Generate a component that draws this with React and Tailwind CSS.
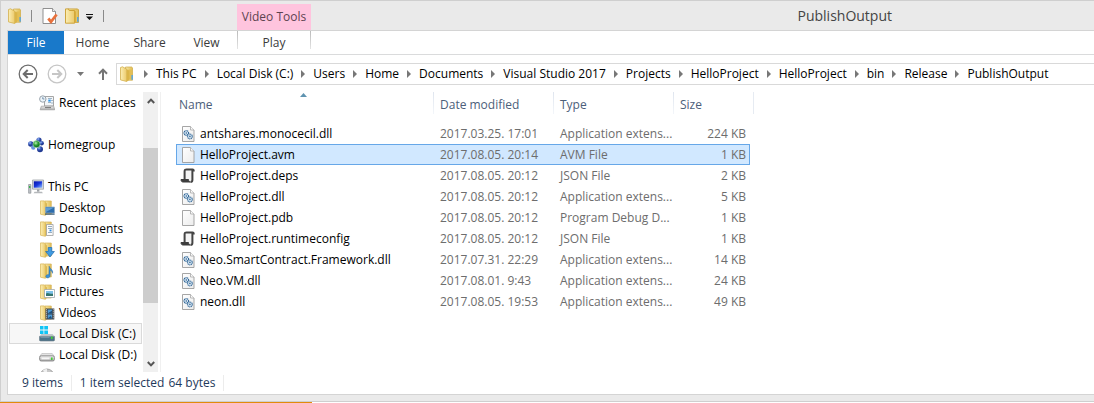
import React from 'react';

const crumbs = [
  'This PC', 'Local Disk (C:)', 'Users', 'Home', 'Documents', 'Visual Studio 2017',
  'Projects', 'HelloProject', 'HelloProject', 'bin', 'Release', 'PublishOutput',
];

const files = [
  { name: 'antshares.monocecil.dll', date: '2017.03.25. 17:01', type: 'Application extens...', size: '224 KB', icon: 'dll' },
  { name: 'HelloProject.avm', date: '2017.08.05. 20:14', type: 'AVM File', size: '1 KB', icon: 'page', selected: true },
  { name: 'HelloProject.deps', date: '2017.08.05. 20:12', type: 'JSON File', size: '2 KB', icon: 'json' },
  { name: 'HelloProject.dll', date: '2017.08.05. 20:12', type: 'Application extens...', size: '5 KB', icon: 'dll' },
  { name: 'HelloProject.pdb', date: '2017.08.05. 20:12', type: 'Program Debug D...', size: '1 KB', icon: 'page' },
  { name: 'HelloProject.runtimeconfig', date: '2017.08.05. 20:12', type: 'JSON File', size: '1 KB', icon: 'json' },
  { name: 'Neo.SmartContract.Framework.dll', date: '2017.07.31. 22:29', type: 'Application extens...', size: '14 KB', icon: 'dll' },
  { name: 'Neo.VM.dll', date: '2017.08.01. 9:43', type: 'Application extens...', size: '24 KB', icon: 'dll' },
  { name: 'neon.dll', date: '2017.08.05. 19:53', type: 'Application extens...', size: '49 KB', icon: 'dll' },
];

function Gradients() {
  return (
    <svg className="absolute h-0 w-0" aria-hidden="true">
      <defs>
        <linearGradient id="folderBack" x1="0" x2="1"><stop offset="0" stopColor="#f7e7a6" /><stop offset="1" stopColor="#e0bd55" /></linearGradient>
        <linearGradient id="folderFront" x1="0" x2="1"><stop offset="0" stopColor="#fbeeb4" /><stop offset="1" stopColor="#ecca6a" /></linearGradient>
        <linearGradient id="paper" x1="0" x2="1" y2="1"><stop offset="0" stopColor="#ffffff" /><stop offset="1" stopColor="#ececec" /></linearGradient>
        <linearGradient id="metal" x1="0" x2="0" y2="1"><stop offset="0" stopColor="#f0f0f0" /><stop offset="1" stopColor="#a9a9a9" /></linearGradient>
        <linearGradient id="screen" x1="0" x2="1" y2="1"><stop offset="0" stopColor="#0712a8" /><stop offset="0.5" stopColor="#1836dd" /><stop offset="1" stopColor="#8fc0ff" /></linearGradient>
        <radialGradient id="ballBlue" cx="0.35" cy="0.3"><stop offset="0" stopColor="#a8c4f5" /><stop offset="0.5" stopColor="#3f63c4" /><stop offset="1" stopColor="#213a92" /></radialGradient>
        <radialGradient id="ballGreen" cx="0.4" cy="0.35"><stop offset="0" stopColor="#b9f2ae" /><stop offset="0.6" stopColor="#2fa038" /><stop offset="1" stopColor="#157a25" /></radialGradient>
      </defs>
    </svg>
  );
}

function Svg({ children }) {
  return <svg viewBox="0 0 16 16" className="h-4 w-4 shrink-0" aria-hidden="true">{children}</svg>;
}

function OpenFolder() {
  return (
    <Svg>
      <path d="M6.5 1h6.2l.8.8v12.4h-7z" fill="url(#folderBack)" stroke="#cfa945" strokeWidth=".7" />
      <path d="M9.5 3.5h3.6V13H9.500z" fill="#e3bf55" />
      <path d="M12.4 9h1.5v4.800h-1.500z" fill="#5ba6dc" />
      <path d="M1.5 1.500 3.500.8l4.300 2.400v12.300L1.500 13.900z" fill="url(#folderFront)" stroke="#d3b04e" strokeWidth=".8" />
      <path d="M7.800 3.400v12l2.400-1.500V4.500z" fill="#dbb548" />
    </Svg>
  );
}

function NewFolder() {
  return (
    <Svg>
      <path d="M4 .9h9.600l.9.9v12.600H4z" fill="url(#folderBack)" stroke="#c99d2f" strokeWidth=".8" />
      <path d="M13 9h1.600v4.800H13z" fill="#5ba6dc" />
      <path d="M1.500.9h2.800l1 1.600h5.200v12.700H1.500z" fill="url(#folderFront)" stroke="#c99d2f" strokeWidth=".9" />
      <path d="M10.500 2.600 12 3.800v10l-1.500 1.400z" fill="#d9ae3d" />
    </Svg>
  );
}

function FolderBase() {
  return (
    <>
      <path d="M6 1h6.300v13H6z" fill="url(#folderBack)" stroke="#d5b35a" strokeWidth=".7" />
      <path d="M1.500.9h4l.9 1.300v13.100L1.500 14.200z" fill="url(#folderFront)" stroke="#dbbb62" strokeWidth=".8" />
      <path d="M6.400 2.200 8 3.400v10.700l-1.600 1.200z" fill="#dcb950" />
    </>
  );
}

function RecentIcon() {
  return (
    <Svg>
      <path d="M5.5 1.5h9v9.5h-9z" fill="#f4f6f8" stroke="#a6a6a6" />
      <path d="M9 3.5h4M9 7.5h3" stroke="#9fb4c4" />
      <path d="M9.3 4.6h2.4v2H9.300z" fill="#2794ec" />
      <path d="M12.5 5.5h1M12.5 8h1" stroke="#4a78a0" />
      <path d="M2.3 11.2h12.400l1 3.600H1.200z" fill="url(#metal)" stroke="#999" strokeWidth=".7" />
      <path d="M6 12.6h6" stroke="#777" />
      <circle cx="3.8" cy="4" r="3.2" fill="#edf5fa" stroke="#8f9aa3" strokeWidth=".9" />
      <path d="M3.8 2.2V4h1.600" fill="none" stroke="#58799a" strokeWidth=".8" />
    </Svg>
  );
}

function HomegroupIcon() {
  return (
    <Svg>
      <circle cx="11" cy="3" r="2.6" fill="url(#ballBlue)" />
      <circle cx="13.6" cy="6.2" r="2.3" fill="url(#ballBlue)" />
      <circle cx="2.8" cy="7" r="2.7" fill="url(#ballBlue)" />
      <circle cx="5.3" cy="10.5" r="2.2" fill="#6793dd" />
      <circle cx="12" cy="12.3" r="3" fill="url(#ballBlue)" />
      <circle cx="8.5" cy="7.2" r="3.6" fill="url(#ballGreen)" stroke="#d9f2dc" strokeWidth=".5" />
    </Svg>
  );
}

function ComputerIcon() {
  return (
    <Svg>
      <path d="M4.5 1h11v9.2h-11z" fill="#d9dcdf" stroke="#9da2a7" strokeWidth=".8" />
      <path d="M5.8 2.3h8.4v6.4H5.8z" fill="url(#screen)" />
      <path d="M9 10.4h2.4v2.3H9z" fill="#9ea2a6" />
      <path d="M6.5 12.7h7.5l.8 1.6H5.6z" fill="#b5b8bb" />
      <path d="M.6 5.5h2.3v8.7H.6z" fill="#bfc3c7" stroke="#82878b" strokeWidth=".6" />
      <path d="M1 7h1.4v2H1z" fill="#37b24c" />
    </Svg>
  );
}

const overlays = {
  desktop: (
    <>
      <path d="M6.5 7h9v6h-9z" fill="#2d6dad" stroke="#8fabc4" strokeWidth=".7" />
      <path d="M7 7.4h8L7 12z" fill="#5f9dd2" />
      <path d="M6 13.5h9.6v1.2H6z" fill="#31536f" />
    </>
  ),
  documents: (
    <>
      <path d="M7.5 3.5h6.6v11H7.5z" fill="#fbfbfb" stroke="#9f9f9f" strokeWidth=".8" />
      <path d="M9 5.5h4M9 7.5h4M9 11.5h4" stroke="#7e99b1" strokeWidth=".8" />
      <path d="M10.5 8.6h2v1.8h-2z" fill="#2f8ce0" />
    </>
  ),
  downloads: <path d="M9.2 5.5h3.6v4h2.6L11 15 6.6 9.5h2.6z" fill="#3f9ae0" stroke="#1f6cb0" strokeWidth=".7" />,
  music: <path d="M10.2 3.2c.4 2.6 4.3 3.4 3.3 7.1-.2-1.8-1.4-2.8-2.4-3.2v5.4c0 3-4.3 3-4.3 1 0-1.6 1.8-2.2 3.1-1.7z" fill="#3a93da" stroke="#2167a4" strokeWidth=".5" />,
  pictures: (
    <>
      <path d="M5.5 5.5h10v8h-10z" fill="#fff" stroke="#a2a8ac" strokeWidth=".8" />
      <path d="M7 7h7v5H7z" fill="#7cc0e8" />
      <path d="M7 9.5c2-1.6 4 .8 7 .2V12H7z" fill="#35756e" />
    </>
  ),
  videos: (
    <>
      <path d="M6.5 3.5h8.8v11H6.5z" fill="#3c4248" />
      <path d="M8.7 4.5h4.4v4H8.7zM8.7 9.6h4.4v4H8.7z" fill="#4f9bd6" />
      <path d="M8.7 8.4 13 5.6v2.8zM8.7 13.5l3-2.5 1.4 2.5z" fill="#1d4f7d" />
      <path d="M7.5 4.3v10M14.3 4.3v10" stroke="#e6e6e6" strokeWidth=".9" strokeDasharray="1 1" />
    </>
  ),
};

function LibraryIcon({ kind }) {
  return <Svg><FolderBase />{overlays[kind]}</Svg>;
}

function DriveIcon({ system }) {
  return (
    <Svg>
      {system && <path d="M1 0h3.5v3.6H1zM5.3 0H9v3.6H5.3zM1 4.4h3.5V8H1zM5.3 4.4H9V8H5.3z" fill="#10c4f5" />}
      {system ? (
        <>
          <path d="M2.4 8h11.2l2 2.5H.4z" fill="#bfc6cb" />
          <path d="M.4 10.4h15.2v3.8l-.8.8H1.2l-.8-.8z" fill="#4d7489" stroke="#6d7e89" strokeWidth=".6" />
          <path d="M1.5 11.3h9" stroke="#83a4b6" strokeWidth=".8" />
        </>
      ) : (
        <>
          <path d="M2.8 6.5h10.4l2.2 3H.6z" fill="#e3e3e3" stroke="#aaa" strokeWidth=".5" />
          <rect x=".6" y="8.8" width="14.8" height="5.2" rx="1.6" fill="url(#metal)" stroke="#7c7c7c" strokeWidth=".8" />
          <path d="M2.5 10.5h8v1.8h-8z" fill="#f6f6f6" />
        </>
      )}
      <path d="M12 10.6h1.6v2.5H12z" fill="#43d035" />
    </Svg>
  );
}

function DiscIcon() {
  return (
    <Svg>
      <circle cx="8" cy="8" r="7" fill="#c9c9c9" stroke="#999" strokeWidth=".8" />
      <path d="M8 8 4 2.2A7 7 0 0 1 8 1z" fill="#f0f0f0" />
      <circle cx="8" cy="8" r="2" fill="#fff" stroke="#999" strokeWidth=".6" />
    </Svg>
  );
}

function FileIcon({ kind }) {
  if (kind === 'json') {
    return (
      <Svg>
        <path d="M4.6 11.5V3.3C4.6 1.9 5.4 1.4 6.6 1.4h6c.8 0 1.100.5 1.100 1.100h-1.300V12c0 1.400-.8 2-2 2" fill="#f4f4f4" stroke="#444" strokeWidth="2" />
        <path d="M1 11.5h7.500c0 1.200.5 2.200 1.500 2.500H3C1.700 14 1 13 1 11.500z" fill="#3d3d3d" stroke="#3d3d3d" />
      </Svg>
    );
  }
  return (
    <Svg>
      <path d="M2.5.5h8L14 4v11.500H2.500z" fill="url(#paper)" stroke="#9c9c9c" strokeWidth=".9" />
      <path d="M10.5.6V4H14" fill="#fafafa" stroke="#a8a8a8" strokeWidth=".8" />
      {kind === 'dll' && (
        <>
          <circle cx="6.3" cy="7" r="2.3" fill="#dceaf5" stroke="#2f6596" strokeWidth="1.2" strokeDasharray="1 .5" />
          <circle cx="9.9" cy="10.4" r="2.4" fill="#dceaf5" stroke="#2f6596" strokeWidth="1.2" strokeDasharray="1 .5" />
          <circle cx="6.3" cy="7" r=".8" fill="#2f6596" />
          <circle cx="9.9" cy="10.4" r=".8" fill="#2f6596" />
        </>
      )}
    </Svg>
  );
}

function PropertiesIcon() {
  return (
    <Svg>
      <path d="M1 .5h9.5l3 3v12H1z" fill="#fff" stroke="#858585" strokeWidth=".9" />
      <path d="M10.5.5v3h3" fill="#eee" stroke="#858585" strokeWidth=".8" />
      <path d="m6.300 10.500 2.700 3.300L14.600 6.500" fill="none" stroke="#e8713c" strokeWidth="2.8" />
    </Svg>
  );
}

function CircleArrow({ flip, color }) {
  return (
    <svg viewBox="0 0 20 20" className="h-5 w-5" aria-hidden="true">
      <circle cx="10" cy="10" r="8.8" fill="none" stroke={color} strokeWidth="1.3" />
      <path d={flip ? 'M5 10h9M10.300 6l4 4-4 4' : 'M15 10H6M9.700 6l-4 4 4 4'} fill="none" stroke={color} strokeWidth="2" />
    </svg>
  );
}

function TreeItem({ icon, label, root, current }) {
  return (
    <li>
      <button
        type="button"
        className={`flex h-[21px] w-full items-center gap-1 border whitespace-nowrap text-left text-black ${root ? 'pl-[18px]' : 'pl-[29px]'} ${current ? 'border-[#dadada] bg-[#f7f7f7]' : 'border-transparent'}`}
      >
        {icon}
        {label}
      </button>
    </li>
  );
}

function Tab({ children }) {
  return <button type="button" className="w-[57px] text-center text-[#3b3b3b]">{children}</button>;
}

function HeaderCell({ children, sorted }) {
  return (
    <th scope="col" className="relative h-[22px] p-0 text-left font-normal text-[#4c607a]">
      <div className="flex h-[22px] items-center pt-1">
        <span className={`flex-1 ${sorted ? 'pl-[3px]' : 'pl-[6px]'}`}>{children}</span>
        <span className="-mt-1 h-[22px] w-px bg-linear-to-b from-[#dfe5ee] to-[#f3f6fa]" />
      </div>
      {sorted && (
        <svg viewBox="0 0 7 4" className="absolute top-[1px] left-[124px] h-1 w-[7px]" aria-hidden="true">
          <path d="M3.5 0 7 4H0z" fill="#5f93b0" />
        </svg>
      )}
    </th>
  );
}

export default function App() {
  return (
    <div className="flex h-screen flex-col overflow-hidden bg-white font-['Open_Sans',sans-serif] text-[12px] leading-4">
      <Gradients />
      <div className="flex min-h-0 flex-1 flex-col border-y border-l border-[#cfcfcf] bg-[#eaeaea]">
        <header className="flex h-[29px] shrink-0 pl-[6px]">
          <div className="flex h-full items-center gap-[6px]">
            <button type="button" aria-label="Folder"><OpenFolder /></button>
            <span className="mr-1 ml-[2px] h-3 w-px bg-[#8a8a8a]" />
            <button type="button" aria-label="Properties"><PropertiesIcon /></button>
            <button type="button" aria-label="New folder"><NewFolder /></button>
            <button type="button" aria-label="Customize toolbar">
              <svg viewBox="0 0 7 6" className="mt-[3px] h-[6px] w-[7px]" aria-hidden="true"><path d="M0 0h7v1H0zM0 2.500h7L3.500 6z" fill="#111" /></svg>
            </button>
            <span className="ml-1 h-3 w-px bg-[#8a8a8a]" />
          </div>
          <div className="mt-[3px] ml-[133px] flex w-[74px] items-center justify-center bg-[#ffc4de] text-[#5c4350]">Video Tools</div>
          <h1 className="mr-[202px] ml-auto self-center text-[14px] leading-5 text-[#444]">PublishOutput</h1>
        </header>

        <div className="mb-[6px] ml-[6px] flex min-h-0 flex-1 flex-col border-y border-l border-[#d4d4d4] bg-white">
          <nav className="flex h-6 shrink-0 border-b border-[#dadbdc]" aria-label="Ribbon">
            <button type="button" className="w-14 bg-[#1979ca] text-white">File</button>
            <Tab>Home</Tab>
            <Tab>Share</Tab>
            <Tab>View</Tab>
            <div className="ml-[2px] flex w-[74px] justify-between">
              <span className="h-[18px] w-px bg-linear-to-b from-[#bbb] to-[#e4e4e4]" />
              <button type="button" className="flex-1 text-[#3b3b3b]">Play</button>
              <span className="h-[18px] w-px bg-linear-to-b from-[#bbb] to-[#e4e4e4]" />
            </div>
          </nav>

          <div className="flex h-[37px] shrink-0 items-center pl-[10px]">
            <button type="button" aria-label="Back"><CircleArrow color="#6d6d6d" /></button>
            <button type="button" aria-label="Forward" className="ml-[9px]"><CircleArrow flip color="#c6c6c6" /></button>
            <button type="button" aria-label="Recent locations" className="ml-[10px]">
              <svg viewBox="0 0 7 4" className="h-1 w-[7px]" aria-hidden="true"><path d="M0 0h7L3.500 4z" fill="#777" /></svg>
            </button>
            <button type="button" aria-label="Up" className="ml-[14px]">
              <svg viewBox="0 0 10 12" className="h-3 w-[10px]" aria-hidden="true"><path d="M5 12V2M1 5.700 5 1.600l4 4.100" fill="none" stroke="#757575" strokeWidth="2" /></svg>
            </button>
            <nav className="ml-2 flex h-[22px] min-w-0 flex-1 items-center overflow-hidden border-y border-l border-[#d9d9d9] pl-[2px]" aria-label="Address">
              <OpenFolder />
              <ol className="flex pl-px">
                {crumbs.map((name, i) => (
                  <li key={i} className="flex items-center whitespace-nowrap">
                    <svg viewBox="0 0 4 8" className="mx-2 h-2 w-1" aria-hidden="true"><path d="M0 0l4 4-4 4z" fill="#777" /></svg>
                    <a href="#" className="text-black">{name}</a>
                  </li>
                ))}
              </ol>
            </nav>
          </div>

          <main className="flex min-h-0 flex-1">
            <aside className="flex w-[153px] shrink-0 border-r border-[#f0f0f0]">
              <ul className="min-w-0 flex-1 overflow-hidden pl-px">
                <TreeItem icon={<RecentIcon />} label="Recent places" />
                <li className="h-[21px]" />
                <TreeItem root icon={<HomegroupIcon />} label="Homegroup" />
                <li className="h-[21px]" />
                <TreeItem root icon={<ComputerIcon />} label="This PC" />
                <TreeItem icon={<LibraryIcon kind="desktop" />} label="Desktop" />
                <TreeItem icon={<LibraryIcon kind="documents" />} label="Documents" />
                <TreeItem icon={<LibraryIcon kind="downloads" />} label="Downloads" />
                <TreeItem icon={<LibraryIcon kind="music" />} label="Music" />
                <TreeItem icon={<LibraryIcon kind="pictures" />} label="Pictures" />
                <TreeItem icon={<LibraryIcon kind="videos" />} label="Videos" />
                <TreeItem current icon={<DriveIcon system />} label="Local Disk (C:)" />
                <TreeItem icon={<DriveIcon />} label="Local Disk (D:)" />
                <TreeItem icon={<DiscIcon />} label="" />
              </ul>
              <div className="mr-[2px] ml-px flex w-[15px] flex-col bg-[#f0f0f0]">
                <button type="button" aria-label="Scroll up" className="flex h-[17px] items-center justify-center">
                  <svg viewBox="0 0 8 6" className="h-[6px] w-2" aria-hidden="true"><path d="M.8 5 4 1.600 7.200 5" fill="none" stroke="#555" strokeWidth="2" /></svg>
                </button>
                <div className="mt-[39px] h-[155px] bg-[#cdcdcd]" />
                <button type="button" aria-label="Scroll down" className="mt-auto flex h-[17px] items-center justify-center">
                  <svg viewBox="0 0 8 6" className="h-[6px] w-2" aria-hidden="true"><path d="M.8 1 4 4.400 7.200 1" fill="none" stroke="#555" strokeWidth="2" /></svg>
                </button>
              </div>
            </aside>

            <section className="min-w-0 flex-1 overflow-hidden pl-[15px]">
              <table className="w-[578px] table-fixed border-separate border-spacing-0">
                <colgroup>
                  <col className="w-[258px]" />
                  <col className="w-[120px]" />
                  <col className="w-[120px]" />
                  <col className="w-[76px]" />
                  <col className="w-1" />
                </colgroup>
                <thead>
                  <tr>
                    <HeaderCell sorted>Name</HeaderCell>
                    <HeaderCell>Date modified</HeaderCell>
                    <HeaderCell>Type</HeaderCell>
                    <th scope="col" className="p-0 pt-1 pl-[6px] text-left font-normal text-[#4c607a]">Size</th>
                    <td className="border-r border-[#e6ebf2] p-0" />
                  </tr>
                </thead>
                <tbody>
                  <tr aria-hidden="true"><td colSpan={5} className="h-[9px] p-0" /></tr>
                  {files.map((f) => {
                    const edge = f.selected ? 'border-[#66a7e8] bg-[#d1e8ff]' : 'border-transparent';
                    return (
                      <tr key={f.name} className="h-[21px] whitespace-nowrap text-[#6d6d6d]">
                        <td className={`border-y border-l p-0 pl-[3px] text-black ${edge}`}>
                          <div className="flex items-center gap-1"><FileIcon kind={f.icon} />{f.name}</div>
                        </td>
                        <td className={`border-y p-0 pl-[6px] ${edge}`}>{f.date}</td>
                        <td className={`border-y p-0 pl-[6px] ${edge}`}>{f.type}</td>
                        <td className={`border-y border-r p-0 pr-[3px] text-right ${edge}`}>{f.size}</td>
                        <td className="p-0" />
                      </tr>
                    );
                  })}
                </tbody>
              </table>
            </section>
          </main>

          <footer className="flex h-[22px] shrink-0 items-center pl-[14px] text-[#1e395b]">
            <span>9 items</span>
            <span className="mx-2 h-4 w-px bg-[#ececec]" />
            <span>1 item selected</span>
            <span className="ml-1">64 bytes</span>
            <span className="ml-2 h-4 w-px bg-[#ececec]" />
          </footer>
        </div>
      </div>
      <div className="h-px w-[312px] shrink-0 bg-[#e38b0b]" />
    </div>
  );
}
